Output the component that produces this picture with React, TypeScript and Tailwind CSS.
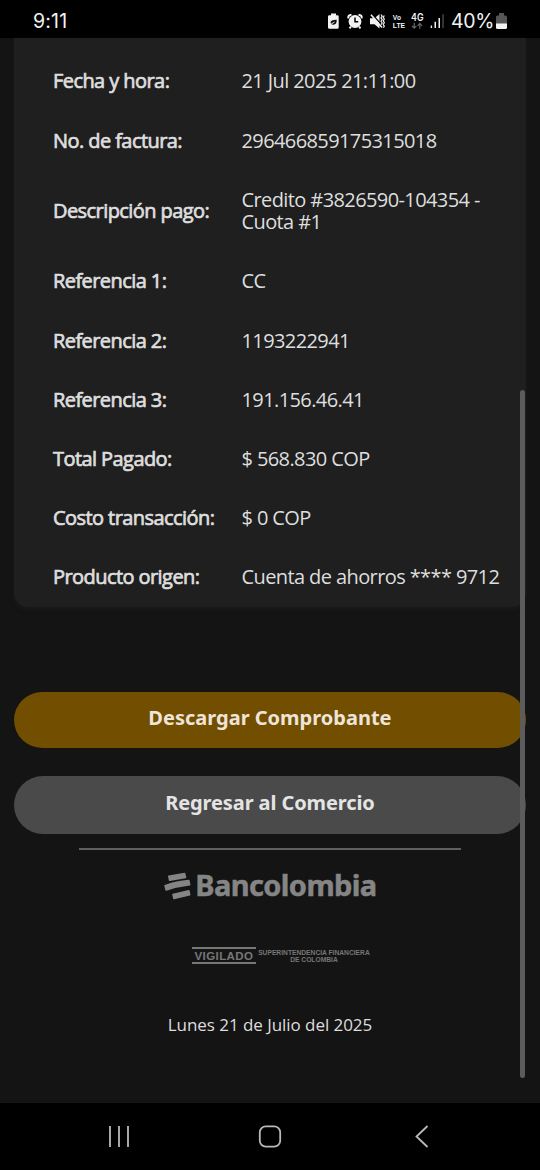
import React from "react";

const DETAILS = [
  { label: "Fecha y hora:", value: "21 Jul 2025 21:11:00" },
  { label: "No. de factura:", value: "296466859175315018" },
  { label: "Descripción pago:", value: "Credito #3826590-104354 - Cuota #1" },
  { label: "Referencia 1:", value: "CC" },
  { label: "Referencia 2:", value: "1193222941" },
  { label: "Referencia 3:", value: "191.156.46.41" },
  { label: "Total Pagado:", value: "$ 568.830 COP" },
  { label: "Costo transacción:", value: "$ 0 COP" },
  { label: "Producto origen:", value: "Cuenta de ahorros **** 9712" },
];

const StatusIcons: React.FC = () => (
  <svg className="w-[120px] h-[24px] shrink-0" viewBox="326 9 120 24" fill="#f2f2f2">
    {/* battery saver */}
    <path d="M331 13.6h5v1.6h1.3q1.4 0 1.4 1.4v10.8q0 1.4-1.4 1.4h-7.9q-1.4 0-1.4-1.4V16.6q0-1.4 1.4-1.4h1.6z" />
    <path d="M330.5 22q1.5-2.5 6.2-2.3.2 4.8-3.2 5-2.2 0-2.6-1.2z" fill="#111" />
    <path d="M330.5 24.5l4-2.5" stroke="#f2f2f2" strokeWidth="0.9" />
    {/* alarm */}
    <circle cx="355" cy="21.5" r="6.4" />
    <path d="M348.3 18.3q-.5-3.3 3.2-3.6M361.7 18.3q.5-3.3-3.2-3.6M351 26.5l-1.5 1.9M359 26.5l1.5 1.9" fill="none" stroke="#f2f2f2" strokeWidth="2" />
    <path d="M355 17.5v4.300h3.200" fill="none" stroke="#000" strokeWidth="1.5" />
    {/* vibrate */}
    <path d="M370 18.3h4.500l5-4.300v14.500l-5-4.300H370z" />
    <path d="M372.5 14.5l10 11.500" stroke="#000" strokeWidth="1.2" />
    <path d="M371 14.800l11 12.700" stroke="#f2f2f2" strokeWidth="1.6" />
    <path d="M381 14.500l1.200 1.700-1.200 1.700 1.200 1.700-1.200 1.700 1.200 1.700-1.200 1.700M384.300 15.500l-1 1.800 1 1.800-1 1.800 1 1.800-1 1.800 1 1.800-1 1.400" fill="none" stroke="#f2f2f2" strokeWidth="1.2" />
    <g fontFamily="Liberation Sans, sans-serif" fontWeight="700">
      <text x="392.8" y="20.3" fontSize="6.6" textLength="8.2">Vo</text>
      <text x="392.8" y="27.9" fontSize="7" textLength="12.3" lengthAdjust="spacingAndGlyphs">LTE</text>
    </g>
    <text x="411" y="20.8" fontFamily="Inter, sans-serif" fontWeight="600" fontSize="9.8" textLength="12.5" lengthAdjust="spacingAndGlyphs">4G</text>
    {/* data arrows */}
    <path d="M414.2 22.8v5.200m-2.200-2.200l2.200 2.400 2.200-2.400M419.800 28.800v-5.200m-2.200 2.200l2.200-2.400 2.200 2.400" fill="none" stroke="#666" strokeWidth="1.2" />
    {/* signal */}
    <path d="M430.700 25.500h1.400v2.500h-1.400zM434.500 21.800h1.500v6.200h-1.500zM438.500 18h1.500v10h-1.500z" />
    <path d="M442.300 14.200h1.500V28h-1.500z" fill="#444" />
  </svg>
);

const StatusBar: React.FC = () => (
  <header className="h-[38px] shrink-0 bg-black flex items-center pt-[4px] pl-[33px] text-[#f2f2f2] font-[Inter,sans-serif] text-[19.5px] leading-[24px]">
    <span className="w-[293px] tracking-[0.2px]">9:11</span>
    <StatusIcons />
    <span className="ml-[5px] w-[45px] whitespace-nowrap tracking-[-0.3px]">40%</span>
    <svg className="w-[11px] h-[16px] shrink-0" viewBox="0 0 11 16">
      <path d="M3 0h5v2.500h1.500Q11 2.500 11 4V11H0V4Q0 2.500 1.500 2.500H3z" fill="#555" />
      <path d="M0 10.500h11v4q0 1.500-1.500 1.500h-8Q0 16 0 14.500z" fill="#f2f2f2" />
    </svg>
  </header>
);

const Bancolombia: React.FC = () => (
  <div className="flex items-center h-[30px] text-[#858585]">
    <svg className="w-[27px] h-[28px] mt-[2px] mr-[4px]" viewBox="0 0 27 28" fill="currentColor" stroke="currentColor" strokeWidth="1.6" strokeLinejoin="round">
      <path d="M4.800 4.200L20.600 1.600L21.500 5.400L5.700 8.200z" />
      <path d="M1.100 13.700Q12 9.600 24.800 8.500L25.700 12.600Q13.500 14 2.200 18z" />
      <path d="M9 22.500L24.800 18.700L25.700 22.700L10 26.500z" />
    </svg>
    <span className="font-['Noto_Sans',sans-serif] font-bold text-[29px] leading-[30px] tracking-[-0.6px] [-webkit-text-stroke:0.5px_#858585]">
      Bancolombia
    </span>
  </div>
);

const NavigationBar: React.FC = () => (
  <nav className="h-[67px] shrink-0 bg-black">
    <svg className="w-[540px] h-[67px]" viewBox="0 1103 540 67" fill="none" stroke="#b9b9b9" strokeWidth="1.8">
      <path d="M110 1126v21M119 1126v21M128 1126v21" />
      <rect x="259.8" y="1126.3" width="20.4" height="20.4" rx="6" />
      <path d="M427.500 1126l-11 10.500 11 10.500" />
    </svg>
  </nav>
);

const App: React.FC = () => (
  <div className="relative w-[540px] h-[1170px] overflow-hidden flex flex-col bg-[#141414] text-[#dedede] font-['Open_Sans',sans-serif]">
    <StatusBar />
    <main className="flex-1 flex flex-col items-center pl-[13.5px] pr-[13.6px]">
      <section className="w-full pt-[14.1px] pl-[39.5px] rounded-b-[14px] bg-[#1f1f1f] shadow-[0_2px_4px_#1b1b1b]">
        {DETAILS.map((item) => (
          <div key={item.label} className="flex items-center py-[18.4px] text-[20px] leading-[22.4px]">
            <div className="w-[188.5px] whitespace-nowrap tracking-[-0.57px] [-webkit-text-stroke:0.7px_#dedede]">
              {item.label}
            </div>
            <div className="w-[265px] tracking-[-0.6px]">{item.value}</div>
          </div>
        ))}
      </section>

      <button className="mt-[84.7px] w-full h-[56.5px] shrink-0 pb-[4px] rounded-full bg-[#714e00] text-[#eee4d8] font-['Noto_Sans',sans-serif] font-bold text-[20px]">
        Descargar Comprobante
      </button>
      <button className="mt-[28px] w-full h-[58px] shrink-0 pb-[4px] rounded-full bg-[#4a4a4a] text-[#e4e4e4] font-['Noto_Sans',sans-serif] font-bold text-[20px] tracking-[-0.1px]">
        Regresar al Comercio
      </button>

      <div className="mt-[14px] w-[382px] h-[1.5px] bg-[#606060]"></div>
      <div className="mt-[20px] ml-[1px]">
        <Bancolombia />
      </div>

      <div className="mt-[47px] ml-[22px] w-[178px] flex items-start text-[#777] font-['Liberation_Sans',sans-serif] font-bold">
        <div className="w-[64px] h-[17px] border-y-2 border-[#777] text-center text-[11.5px] leading-[14px] tracking-[0.4px]">
          VIGILADO
        </div>
        <div className="ml-[2px] mt-[2px] w-[112px] text-center whitespace-nowrap text-[6.7px] leading-[7.5px]">
          SUPERINTENDENCIA FINANCIERA
          <br />
          DE COLOMBIA
        </div>
      </div>

      <div className="mt-[49px] text-[17px] leading-[24px] tracking-[-0.05px]">
        Lunes 21 de Julio del 2025
      </div>
    </main>
    <NavigationBar />
    {/* scroll thumb over the page */}
    <div className="absolute left-[520px] top-[390px] w-[5px] h-[688px] rounded-full bg-[#5c5c5c]"></div>
  </div>
);

export default App;
